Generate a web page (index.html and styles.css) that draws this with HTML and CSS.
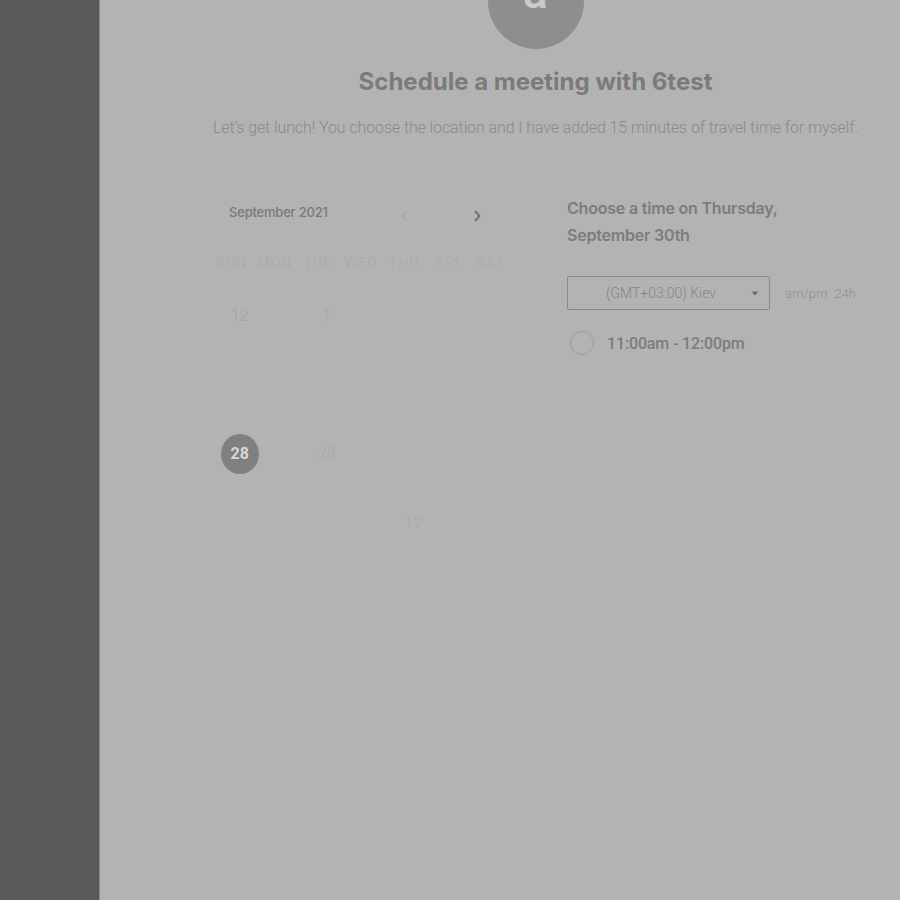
FILE: index.html
```html
<!DOCTYPE html>
<html>
<head>
<meta charset="utf-8">
<link rel="stylesheet" href="styles.css">
</head>
<body>
<div class="app">
  <aside class="sidebar"></aside>
  <main class="main">
    <header class="header">
      <div class="avatar"><span>a</span></div>
      <h1 class="title">Schedule a meeting with 6test</h1>
      <p class="subtitle">Let’s get lunch! You choose the location and I have added 15 minutes of travel time for myself.</p>
    </header>
    <section class="booking">
      <div class="calendar">
        <div class="cal-nav">
          <span class="month">September 2021</span>
          <div class="arrows">
            <svg class="arrow prev" width="10" height="14" viewBox="0 0 10 14"><path d="M7 2 L2.5 7 L7 12" fill="none" stroke="currentColor" stroke-width="1.6"/></svg>
            <svg class="arrow next" width="10" height="14" viewBox="0 0 10 14"><path d="M3 2 L7.5 7 L3 12" fill="none" stroke="currentColor" stroke-width="2"/></svg>
          </div>
        </div>
        <div class="weekdays">
          <span>SUN</span><span>MON</span><span>TUE</span><span>WED</span><span>THU</span><span>FRI</span><span>SAT</span>
        </div>
        <div class="days">
          <span class="day faint">12</span><span class="day"></span><span class="day fainter">1</span><span class="day"></span><span class="day"></span><span class="day"></span><span class="day"></span>
          <span class="day"></span><span class="day"></span><span class="day"></span><span class="day"></span><span class="day"></span><span class="day"></span><span class="day"></span>
          <span class="day"><b class="selected">28</b></span><span class="day"></span><span class="day fainter">28</span><span class="day"></span><span class="day"></span><span class="day"></span><span class="day"></span>
          <span class="day"></span><span class="day"></span><span class="day"></span><span class="day"></span><span class="day fainter">12</span><span class="day"></span><span class="day"></span>
          <span class="day"></span><span class="day"></span><span class="day"></span><span class="day"></span><span class="day"></span><span class="day"></span><span class="day"></span>
        </div>
      </div>
      <div class="times">
        <h2 class="times-title">Choose a time on Thursday,<br>September 30th</h2>
        <div class="tz-row">
          <div class="select">
            <span>(GMT+03:00) Kiev</span>
            <svg class="caret" width="8" height="5" viewBox="0 0 8 5"><path d="M0.5 0.5 L7.5 0.5 L4 4.5 Z" fill="currentColor"/></svg>
          </div>
          <div class="format"><span>am/pm</span><span>24h</span></div>
        </div>
        <label class="slot">
          <span class="radio"></span>
          <span class="slot-text">11:00am - 12:00pm</span>
        </label>
      </div>
    </section>
  </main>
</div>
</body>
</html>
```
FILE: styles.css
```css
html, body {
  margin: 0;
  padding: 0;
  height: 100%;
  overflow: hidden;
}
body {
  background: #b3b3b3;
  font-family: Roboto, "Liberation Sans", sans-serif;
}
.app {
  display: flex;
  height: 900px;
}
.sidebar {
  width: 99px;
  flex: 0 0 99px;
  background: #595959;
  border-right: 1px solid #8b8b8b;
}
.main {
  flex: 1;
  background: #b3b3b3;
  padding-left: 113px;
}
.header {
  width: 645px;
  display: flex;
  flex-direction: column;
  align-items: center;
}
.avatar {
  width: 96px;
  height: 96px;
  border-radius: 50%;
  background: #8e8e8e;
  margin-top: -47px;
  display: flex;
  align-items: center;
  justify-content: center;
}
.avatar span {
  font-family: Roboto, sans-serif;
  font-size: 46px;
  font-weight: 500;
  color: #cbcbcb;
  line-height: 1;
  margin-top: -18px;
}
.title {
  margin: 18px 0 0;
  font-family: Inter, Roboto, sans-serif;
  font-weight: 700;
  font-size: 24px;
  line-height: 30px;
  color: #7b7b7b;
  letter-spacing: 0;
}
.subtitle {
  margin: 19px 0 0;
  font-family: Roboto, sans-serif;
  font-weight: 300;
  font-size: 16px;
  line-height: 24px;
  color: #8a8a8a;
  white-space: nowrap;
  letter-spacing: -0.1px;
}
.booking {
  display: flex;
  margin-top: 54px;
}
.calendar {
  width: 305px;
  margin-left: 4px;
}
.cal-nav {
  display: flex;
  align-items: center;
  height: 44px;
}
.month {
  font-family: Inter, Roboto, sans-serif;
  font-size: 13px;
  font-weight: 500;
  color: #7a7a7a;
  margin-left: 12px;
  margin-top: -8px;
  width: 168px;
  letter-spacing: -0.2px;
}
.arrows {
  display: flex;
  align-items: center;
  gap: 62px;
  margin-left: 3px;
}
.arrow.prev { color: #a9a9a9; }
.arrow.next { color: #727272; }
.weekdays {
  display: grid;
  grid-template-columns: repeat(7, 1fr);
  width: 302px;
  height: 24px;
  align-items: center;
  margin-left: -7px;
  margin-top: 13px;
}
.weekdays span {
  text-align: center;
  font-size: 14px;
  font-weight: 300;
  letter-spacing: 1px;
  color: #a9a9a9;
}
.days {
  display: grid;
  grid-template-columns: repeat(7, 1fr);
  grid-auto-rows: 69px;
  margin-top: 6px;
  margin-left: 1px;
}
.day {
  display: flex;
  align-items: center;
  justify-content: center;
  font-size: 16px;
  font-weight: 300;
  color: #b0b0b0;
}
.day.faint { color: #a3a3a3; }
.day.fainter { color: #a8a8a8; }
.selected {
  width: 38px;
  height: 40px;
  border-radius: 50%;
  background: #808080;
  color: #d8d8d8;
  font-weight: 700;
  font-size: 16px;
  display: flex;
  align-items: center;
  justify-content: center;
}
.times {
  margin-left: 45px;
  width: 300px;
  padding-top: 1px;
}
.times-title {
  margin: 0;
  font-family: Inter, Roboto, sans-serif;
  font-size: 16px;
  font-weight: 600;
  line-height: 27px;
  color: #7c7c7c;
  letter-spacing: -0.2px;
}
.tz-row {
  display: flex;
  align-items: center;
  margin-top: 27px;
}
.select {
  height: 32px;
  border: 1px solid #8a8a8a;
  border-radius: 2px;
  display: flex;
  align-items: center;
  justify-content: space-between;
  padding: 0 10px 0 38px;
  box-sizing: content-box;
  width: 153px;
  font-size: 14px;
  font-weight: 300;
  color: #858585;
}
.caret { color: #6e6e6e; }
.format {
  margin-left: 15px;
  display: flex;
  gap: 7px;
  font-size: 13px;
  font-weight: 300;
  color: #8f8f8f;
}
.slot {
  display: flex;
  align-items: center;
  margin-top: 21px;
}
.radio {
  width: 22px;
  height: 22px;
  border: 1px solid #9b9b9b;
  border-radius: 50%;
  margin-left: 3px;
}
.slot-text {
  margin-left: 13px;
  font-size: 16px;
  font-weight: 500;
  color: #7c7c7c;
  letter-spacing: -0.15px;
}
```
